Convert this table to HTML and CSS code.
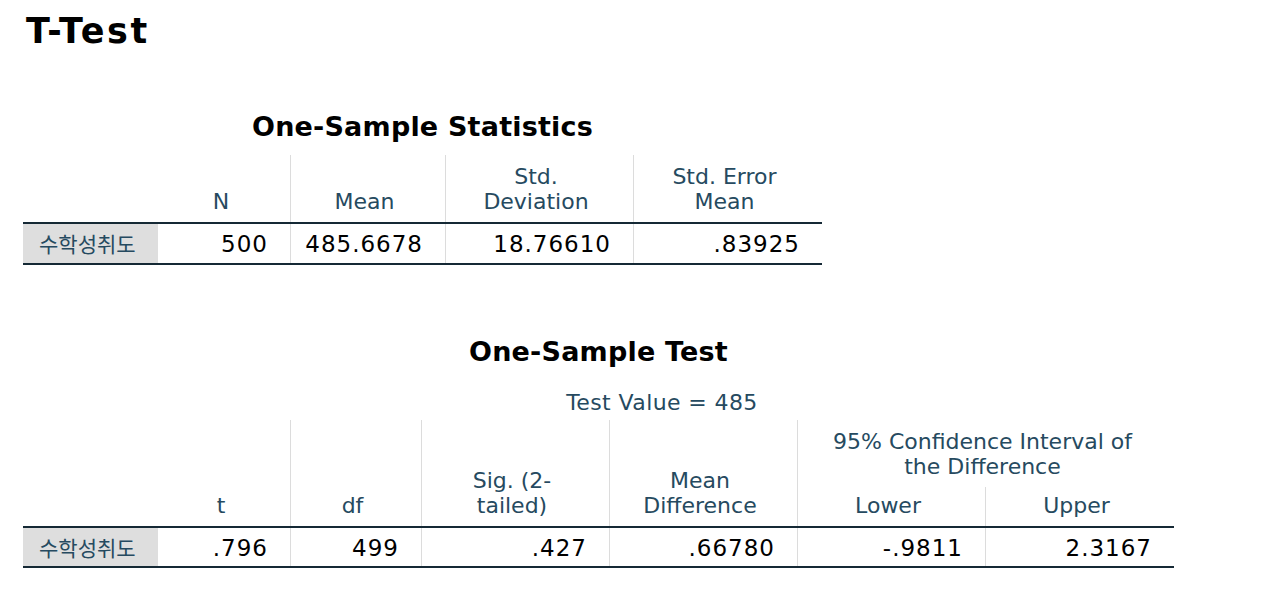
FILE: index.html
```html
<!DOCTYPE html>
<html lang="ko">
<head>
<meta charset="utf-8">
<title>T-Test</title>
<link rel="stylesheet" href="styles.css">
</head>
<body>
<main class="page">
  <h1 class="doc-title">T-Test</h1>

  <section class="pivot pivot-stats">
    <h2 class="pivot-title">One-Sample Statistics</h2>
    <div class="grid grid-stats">
      <div class="hc corner"></div>
      <div class="hc">N</div>
      <div class="hc sep">Mean</div>
      <div class="hc sep">Std.<br>Deviation</div>
      <div class="hc sep">Std. Error<br>Mean</div>

      <div class="rl">수학성취도</div>
      <div class="dc">500</div>
      <div class="dc sep">485.6678</div>
      <div class="dc sep">18.76610</div>
      <div class="dc sep">.83925</div>
    </div>
  </section>

  <section class="pivot pivot-test">
    <h2 class="pivot-title">One-Sample Test</h2>
    <div class="grid grid-test">
      <div class="testval">Test Value = 485</div>

      <div class="hc corner span2"></div>
      <div class="hc span2">t</div>
      <div class="hc sep span2">df</div>
      <div class="hc sep span2">Sig. (2-<br>tailed)</div>
      <div class="hc sep span2">Mean<br>Difference</div>
      <div class="hc sep ci">95% Confidence Interval of<br>the Difference</div>
      <div class="hc sep sub">Lower</div>
      <div class="hc sep sub">Upper</div>

      <div class="rl">수학성취도</div>
      <div class="dc">.796</div>
      <div class="dc sep">499</div>
      <div class="dc sep">.427</div>
      <div class="dc sep">.66780</div>
      <div class="dc sep">-.9811</div>
      <div class="dc sep">2.3167</div>
    </div>
  </section>
</main>
</body>
</html>
```

FILE: styles.css
```css
* {
  box-sizing: border-box;
}

html, body {
  margin: 0;
  padding: 0;
  background: #ffffff;
}

body {
  font-family: "DejaVu Sans", "Noto Sans CJK KR", sans-serif;
  color: #000000;
}

.page {
  padding: 0 0 0 23px;
}

.doc-title {
  margin: 11px 0 0 3px;
  font-size: 35px;
  line-height: 40px;
  font-weight: bold;
  letter-spacing: 2.5px;
  color: #000000;
}

.pivot {
  display: flex;
  flex-direction: column;
  align-items: flex-start;
}

.pivot-title {
  margin: 0 0 12px 0;
  font-size: 27px;
  line-height: 32px;
  font-weight: bold;
  letter-spacing: 0.2px;
  text-align: center;
  color: #000000;
  align-self: stretch;
}

.pivot-stats {
  width: 799px;
  margin-top: 60px;
}

.pivot-test {
  width: 1151px;
  margin-top: 71px;
}

.pivot-test .pivot-title {
  margin-bottom: 22px;
}

.grid {
  display: grid;
}

.grid-stats {
  grid-template-columns: 135px 132px 155px 188px 189px;
  grid-template-rows: 69px 41px;
}

.grid-test {
  grid-template-columns: 135px 132px 131px 188px 188px 188px 189px;
  grid-template-rows: 30px 67px 41px 40px;
}

.hc {
  display: flex;
  flex-direction: column;
  justify-content: flex-end;
  align-items: center;
  text-align: center;
  white-space: nowrap;
  font-size: 22px;
  line-height: 25px;
  color: #264a60;
  padding: 0 8px 8px 2px;
  border-bottom: 2px solid #152935;
}

.sep {
  box-shadow: inset 1px 0 0 #dcdcdc;
}

.grid-test .span2 {
  grid-row: 2 / 4;
}

.grid-test .ci {
  grid-column: 6 / 8;
  grid-row: 2;
  border-bottom: none;
}

.grid-test .sub {
  grid-row: 3;
}

.grid-test .rl,
.grid-test .dc {
  grid-row: 4;
}

.testval {
  grid-column: 2 / 8;
  grid-row: 1;
  text-align: center;
  font-size: 22px;
  line-height: 25px;
  letter-spacing: 0.4px;
  color: #264a60;
  padding: 0 8px 5px 0;
  white-space: nowrap;
}

.rl {
  background: #dedede;
  color: #264a60;
  font-size: 21px;
  line-height: 25px;
  padding: 9px 0 0 16px;
  border-bottom: 2px solid #152935;
  white-space: nowrap;
}

.dc {
  text-align: right;
  font-size: 23px;
  line-height: 25px;
  letter-spacing: 1px;
  color: #000000;
  padding: 8px 22px 0 0;
  border-bottom: 2px solid #152935;
  white-space: nowrap;
}
```
